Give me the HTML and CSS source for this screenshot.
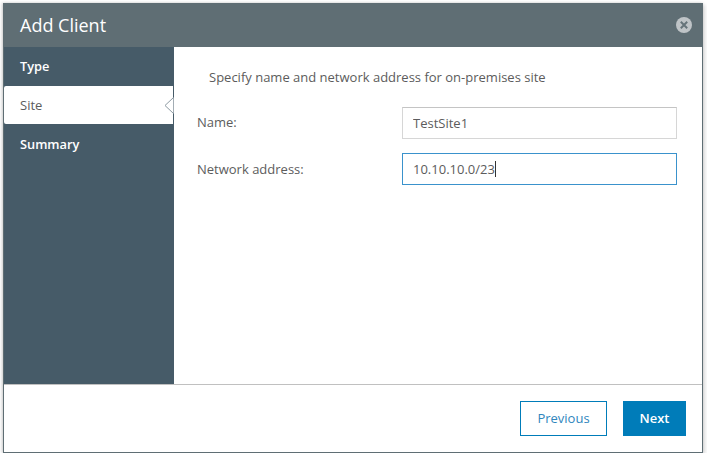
FILE: index.html
```html
<!DOCTYPE html>
<html lang="en">
<head>
    <meta charset="UTF-8" />
    <title>Add Client</title>
    <link rel="stylesheet" href="styles.css">
</head>
<body>
    <main class="dialog">
        <header class="dialog-header">
            <h1>Add Client</h1>
            <svg class="close-icon" width="16" height="16" viewBox="0 0 16 16">
                <circle cx="8" cy="8" r="8" fill="#bfc4c7" />
                <path d="M4.8 4.8l6.4 6.4M11.2 4.8l-6.4 6.4" stroke="#66747a" stroke-width="2" fill="none" />
            </svg>
        </header>
        <div class="dialog-body">
            <nav class="steps">
                <div class="step">Type</div>
                <div class="step step--active">
                    Site
                    <svg class="step-notch" width="10" height="20" viewBox="0 0 10 20">
                        <path d="M9.5 2.5L1 10.5l8.5 8" stroke="#8d9aa2" stroke-width="1" fill="#fff" />
                    </svg>
                </div>
                <div class="step">Summary</div>
            </nav>
            <section class="content">
                <p class="intro">Specify name and network address for on-premises site</p>
                <div class="field field--name">
                    <label for="siteName">Name:</label>
                    <input type="text" id="siteName" class="input" value="TestSite1" />
                </div>
                <div class="field">
                    <label for="siteAddress">Network address:</label>
                    <div class="input input--focus">10.10.10.0/23<span class="caret"></span></div>
                </div>
            </section>
        </div>
        <footer class="dialog-footer">
            <button class="btn btn--outline">Previous</button>
            <button class="btn btn--primary">Next</button>
        </footer>
    </main>
</body>
</html>
```
FILE: styles.css
```css
html, body {
    margin: 0;
    padding: 0;
}
* {
    box-sizing: border-box;
}
body {
    background-color: #fff;
    font-family: 'Open Sans', sans-serif;
    font-size: 13px;
    color: #5c5c5c;
}
.dialog {
    display: flex;
    flex-direction: column;
    width: 700px;
    height: 450px;
    margin: 3px 0 0 3px;
    background-color: #fff;
    border: 1px solid #5f6e74;
    border-top: none;
    box-shadow: 2px 2px 4px rgba(0, 0, 0, 0.15), -1px 0 3px rgba(0, 0, 0, 0.2);
}
.dialog-header {
    display: flex;
    flex-shrink: 0;
    align-items: center;
    justify-content: space-between;
    height: 44px;
    margin: 0 -1px;
    padding: 0 11px 0 17px;
    background-color: #5f6e74;
}
.dialog-header h1 {
    margin: 0;
    font-size: 18px;
    font-weight: 400;
    color: #fff;
}
.dialog-body {
    display: flex;
    flex: 1;
    border-bottom: 1px solid #c0c0c0;
}
.steps {
    width: 170px;
    background-color: #465b68;
}
.step {
    position: relative;
    height: 39px;
    padding: 10px 0 0 16px;
    font-size: 12.8px;
    font-weight: 600;
    color: #fff;
}
.step:last-child {
    padding-top: 11px;
}
.step--active {
    height: 38px;
    padding-top: 10px;
    background-color: #fff;
    font-size: 13px;
    font-weight: 400;
    color: #5c5c5c;
    border-radius: 2px 0 0 2px;
    margin-right: 1px;
}
.step-notch {
    position: absolute;
    right: -1px;
    top: 9px;
}
.content {
    flex: 1;
    padding: 21px 25px 0 23px;
}
.intro {
    margin: 0 0 21px 12px;
    line-height: 18px;
}
.field {
    display: flex;
    align-items: center;
    justify-content: space-between;
    margin-bottom: 14px;
}
.field--name label {
    margin-bottom: 2px;
}
.input {
    display: flex;
    align-items: center;
    width: 275px;
    height: 32px;
    padding: 0 10px;
    border: 1px solid #d6d6d6;
    border-top-color: #c4c4c4;
    font-family: inherit;
    font-size: 13px;
    color: #5c5c5c;
    outline: none;
}
.input--focus {
    border-color: #3a92cc;
}
.caret {
    display: inline-block;
    width: 1px;
    height: 16px;
    background-color: #333;
}
.dialog-footer {
    display: flex;
    flex-shrink: 0;
    justify-content: flex-end;
    gap: 16px;
    height: 67px;
    padding: 16px 16px 0 0;
}
.btn {
    height: 35px;
    padding: 0 0 2px;
    font-family: inherit;
    font-size: 13px;
    border: 1px solid #007cb9;
    border-radius: 0;
}
.btn--outline {
    width: 87px;
    background-color: #fff;
    color: #2f86bd;
}
.btn--primary {
    width: 63px;
    background-color: #007cb9;
    color: #fff;
    font-weight: 600;
}
```
